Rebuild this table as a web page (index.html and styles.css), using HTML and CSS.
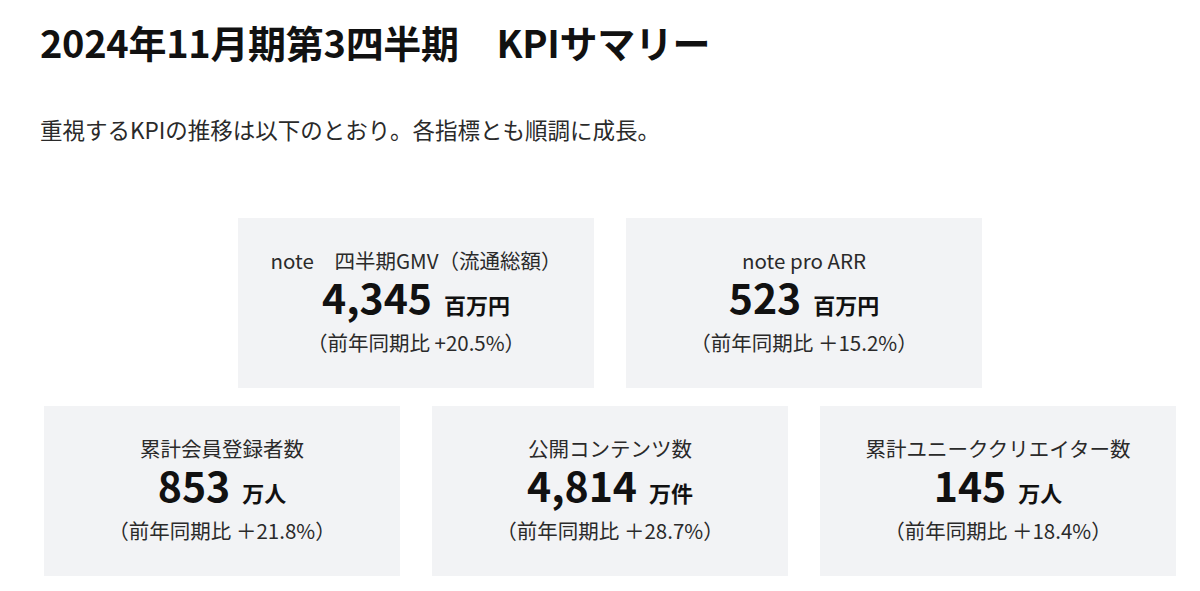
FILE: index.html
```html
<!DOCTYPE html>
<html lang="ja">
<head>
<meta charset="utf-8">
<title>KPIサマリー</title>
<link rel="stylesheet" href="styles.css">
</head>
<body>
<main class="page">
  <h1 class="title">2024年11月期第3四半期　KPIサマリー</h1>
  <p class="lead">重視するKPIの推移は以下のとおり。各指標とも順調に成長。</p>
  <section class="kpis">
    <div class="row row-top">
      <div class="card">
        <div class="label">note　四半期GMV（流通総額）</div>
        <div class="value"><span class="num">4,345</span><span class="unit">百万円</span></div>
        <div class="delta">（前年同期比 +20.5%）</div>
      </div>
      <div class="card">
        <div class="label">note pro ARR</div>
        <div class="value"><span class="num">523</span><span class="unit">百万円</span></div>
        <div class="delta">（前年同期比 ＋15.2%）</div>
      </div>
    </div>
    <div class="row row-bottom">
      <div class="card">
        <div class="label">累計会員登録者数</div>
        <div class="value"><span class="num">853</span><span class="unit">万人</span></div>
        <div class="delta">（前年同期比 ＋21.8%）</div>
      </div>
      <div class="card">
        <div class="label">公開コンテンツ数</div>
        <div class="value"><span class="num">4,814</span><span class="unit">万件</span></div>
        <div class="delta">（前年同期比 ＋28.7%）</div>
      </div>
      <div class="card">
        <div class="label">累計ユニーククリエイター数</div>
        <div class="value"><span class="num">145</span><span class="unit">万人</span></div>
        <div class="delta">（前年同期比 ＋18.4%）</div>
      </div>
    </div>
  </section>
</main>
</body>
</html>
```

FILE: styles.css
```css
* { box-sizing: border-box; }
html, body { margin: 0; padding: 0; background: #ffffff; }
body {
  font-family: "Noto Sans CJK JP", "Noto Sans", sans-serif;
  color: #222;
}
.page {
  width: 1200px;
  height: 591px;
  padding: 0 24px 0 40px;
  overflow: hidden;
}
.title {
  margin: 0;
  padding-top: 20px;
  font-size: 38px;
  line-height: 44px;
  font-weight: 700;
  color: #111;
  letter-spacing: -0.3px;
}
.lead {
  margin: 50px 0 0;
  font-size: 22.5px;
  line-height: 30px;
  color: #2a2a2a;
}
.kpis {
  margin-top: 74px;
  display: flex;
  flex-direction: column;
  gap: 18px;
  padding-left: 3px;
  width: 1137px;
}
.row {
  display: flex;
  gap: 32px;
  justify-content: center;
}
.card {
  width: 356px;
  height: 170px;
  background: #f2f3f5;
  padding-top: 28px;
  text-align: center;
  display: flex;
  flex-direction: column;
  align-items: center;
}
.label {
  font-size: 20.5px;
  line-height: 28px;
  height: 28px;
  color: #2a2a2a;
}
.value {
  display: flex;
  align-items: baseline;
  justify-content: center;
  height: 44px;
  color: #111;
  font-weight: 700;
  margin-top: 0;
}
.num {
  font-size: 41px;
  line-height: 44px;
}
.unit {
  font-size: 22px;
  line-height: 44px;
  margin-left: 12px;
}
.delta {
  margin-top: 10px;
  font-size: 20.5px;
  line-height: 28px;
  height: 28px;
  color: #2a2a2a;
}
```
